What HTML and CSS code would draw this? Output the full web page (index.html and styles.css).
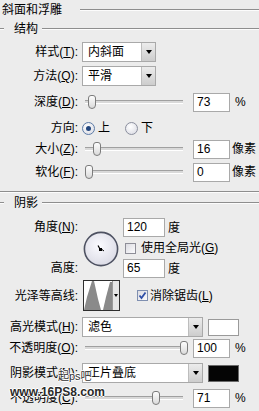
FILE: index.html
```html
<!DOCTYPE html>
<html lang="zh">
<head>
<meta charset="utf-8">
<link rel="stylesheet" href="styles.css">
</head>
<body>
<div class="panel">
  <div class="head title"><span class="head-text">斜面和浮雕</span><span class="rule"></span></div>
  <div class="head group"><span class="lead"></span><span class="head-text">结构</span><span class="rule"></span></div>

  <div class="row r1"><span class="lbl">样式(<u>T</u>):</span><div class="select narrow"><span class="val">内斜面</span><span class="btn"><i class="arrow"></i></span></div></div>
  <div class="row r2"><span class="lbl">方法(<u>Q</u>):</span><div class="select narrow"><span class="val">平滑</span><span class="btn"><i class="arrow"></i></span></div></div>
  <div class="row r3"><span class="lbl">深度(<u>D</u>):</span><div class="slider"><span class="track"></span><span class="thumb" style="left:3px"></span></div><span class="num">73</span><span class="unit pct">%</span></div>
  <div class="row r4"><span class="lbl">方向:</span><span class="radio on"></span><span class="rtext">上</span><span class="radio off"></span><span class="rtext">下</span></div>
  <div class="row r5"><span class="lbl">大小(<u>Z</u>):</span><div class="slider"><span class="track"></span><span class="thumb" style="left:8px"></span></div><span class="num">16</span><span class="unit px">像素</span></div>
  <div class="row r6"><span class="lbl">软化(<u>F</u>):</span><div class="slider"><span class="track"></span><span class="thumb" style="left:0px"></span></div><span class="num">0</span><span class="unit px">像素</span></div>

  <div class="divider"></div>
  <div class="head group g2"><span class="lead"></span><span class="head-text">阴影</span><span class="rule"></span></div>

  <div class="angle">
    <div class="angle-labels"><span class="lbl">角度(<u>N</u>):</span><span class="lbl">高度:</span></div>
    <svg class="dial" width="36" height="36" viewBox="0 0 36 36">
      <defs>
        <radialGradient id="dg" cx="45%" cy="40%" r="60%">
          <stop offset="0" stop-color="#fbfbff"/>
          <stop offset="1" stop-color="#dcdce6"/>
        </radialGradient>
      </defs>
      <circle cx="18" cy="18" r="16.6" fill="url(#dg)" stroke="#4e5262" stroke-width="1.6"/>
      <line x1="17" y1="18" x2="15" y2="14.5" stroke="#000" stroke-width="1.2"/>
      <rect x="16" y="17" width="3" height="3" fill="#000"/>
      <line x1="19" y1="18.5" x2="21" y2="20" stroke="#000" stroke-width="1"/>
    </svg>
    <div class="angle-ctrl">
      <div class="aline"><span class="num first">120</span><span class="unit deg">度</span></div>
      <div class="aline chkline"><span class="check"></span><span class="ctext">使用全局光(<u>G</u>)</span></div>
      <div class="aline"><span class="num first">65</span><span class="unit deg">度</span></div>
    </div>
  </div>

  <div class="row contour-row"><span class="lbl">光泽等高线:</span>
    <div class="contour">
      <svg class="curve" width="28" height="29" viewBox="0 0 28 29">
        <path d="M0 29 L3 16 L8 0 L10 0 L14 18 L17 29 Z" fill="#8a8a8a"/>
        <path d="M19 29 L22 16 L26 1 L28 1 L28 29 Z" fill="#8a8a8a"/>
      </svg>
      <span class="cbtn"><i class="arrow small"></i></span>
    </div>
    <span class="check on"><svg width="9" height="9" viewBox="0 0 9 9"><path d="M1.5 4.5 L3.5 7 L7.5 1.5" fill="none" stroke="#2f4fa8" stroke-width="1.8"/></svg></span><span class="ctext2">消除锯齿(<u>L</u>)</span>
  </div>

  <div class="row r7"><span class="lbl">高光模式(<u>H</u>):</span><div class="select wide"><span class="val">滤色</span><span class="btn"><i class="arrow"></i></span></div><span class="swatch white"></span></div>
  <div class="row r8"><span class="lbl">不透明度(<u>O</u>):</span><div class="slider"><span class="track"></span><span class="thumb" style="left:95px"></span></div><span class="num">100</span><span class="unit pct">%</span></div>
  <div class="row r9"><span class="lbl">阴影模式(<u>N</u>):</span><div class="select wide"><span class="val">正片叠底</span><span class="btn"><i class="arrow"></i></span></div><span class="swatch black"></span></div>
  <div class="row r10"><span class="lbl">不透明度(<u>C</u>):</span><div class="slider"><span class="track"></span><span class="thumb" style="left:67px"></span></div><span class="num">71</span><span class="unit pct">%</span></div>

  <div class="wm">起ps吧</div>
  <div class="wm2">www.16<b>PS8</b>.com</div>
</div>
</body>
</html>
```

FILE: styles.css
```css
* { box-sizing: border-box; }
html, body { margin: 0; padding: 0; }
body {
  background: #ececec;
  font-family: "Liberation Sans", "Noto Sans CJK SC", sans-serif;
  font-size: 12px;
  line-height: 14px;
  color: #000;
  width: 259px;
  height: 411px;
  overflow: hidden;
}
u { text-decoration: underline; text-underline-offset: 1px; }
.panel { position: relative; display: flex; flex-direction: column; width: 259px; height: 411px; }

.head { display: flex; align-items: center; }
.title { height: 20px; padding-left: 2px; }
.title .rule { margin-left: 18px; }
.rule { flex: 1; height: 2px; border-top: 1px solid #8e8e8e; border-bottom: 1px solid #fcfcfc; }
.group { height: 18px; }
.g2 { margin-top: 1px; }
.lead { width: 4px; height: 2px; border-top: 1px solid #8e8e8e; border-bottom: 1px solid #fcfcfc; margin-right: 10px; }
.group .rule { margin-left: 4px; }

.divider { height: 2px; margin-top: 9px; border-top: 1px solid #8e8e8e; border-bottom: 1px solid #fcfcfc; flex: none; }

.row { display: flex; align-items: center; height: 20px; flex: none; }
.lbl { width: 80px; text-align: right; padding-right: 2px; flex: none; white-space: nowrap; }

.r1 { margin-top: 4px; }
.r2 { margin-top: 4px; }
.r3 { margin-top: 6px; }
.r4 { margin-top: 6px; }
.r5 { margin-top: 1px; }
.r6 { margin-top: 3px; }
.r7 { margin-top: 6px; }
.r8 { margin-top: 1px; }
.r9 { margin-top: 5px; }
.r10 { margin-top: 5px; }

.select { display: flex; height: 20px; margin-left: 2px; background: #fff; border: 1px solid #a9a9a9; flex: none; }
.select.narrow { width: 74px; }
.select.wide { width: 121px; }
.select .val { flex: 1; padding-left: 5px; line-height: 18px; white-space: nowrap; overflow: hidden; }
.select .btn { width: 14px; background: linear-gradient(#ececec, #cdcdcd); border-left: 1px solid #bdbdbd; display: flex; align-items: center; justify-content: center; }
.arrow { width: 0; height: 0; border-left: 3.5px solid transparent; border-right: 3.5px solid transparent; border-top: 4px solid #000; }
.arrow.small { border-left-width: 2.5px; border-right-width: 2.5px; border-top-width: 3px; }

.slider { position: relative; width: 98px; height: 14px; margin-left: 5px; flex: none; }
.slider .track { position: absolute; left: 0; right: 0; top: 5px; height: 4px; border-top: 1px solid #a0a0a0; border-bottom: 1px solid #fff; background: #d9d9d9; }
.slider .thumb { position: absolute; top: 0; width: 8px; height: 14px; border: 1px solid #7c7c7c; border-radius: 3px 3px 4px 4px; background: linear-gradient(#fdfdfd, #dadada); }

.num { width: 37px; height: 19px; margin-left: 10px; background: #fff; border: 1px solid #a9a9a9; padding-left: 3px; line-height: 17px; flex: none; }
.unit.pct { margin-left: 5px; }
.unit.px { margin-left: 2px; }

.radio { width: 13px; height: 13px; border-radius: 50%; border: 1px solid #8b8f9e; background: radial-gradient(circle at 40% 35%, #ffffff, #d6d7e0); margin-left: 2px; position: relative; flex: none; }
.radio.on { border-color: #5d7ca8; }
.radio.on::after { content: ""; position: absolute; left: 3px; top: 3px; width: 5px; height: 5px; border-radius: 50%; background: #22467e; }
.radio.off { margin-left: 15px; }
.rtext { margin-left: 3px; }

.angle { display: flex; height: 60px; margin-top: 6px; flex: none; }
.angle-labels { display: flex; flex-direction: column; justify-content: space-between; }
.angle-labels .lbl { line-height: 19px; height: 19px; }
.dial { margin-left: 3px; align-self: center; margin-top: 1px; }
.angle-ctrl { display: flex; flex-direction: column; margin-left: 4px; }
.aline { display: flex; align-items: center; height: 19px; }
.aline.chkline { height: 22px; }
.num.first { margin-left: 0; width: 42px; }
.unit.deg { margin-left: 3px; }
.check { width: 11px; height: 11px; border: 1px solid #8e8e98; background: linear-gradient(135deg, #dcdce2, #fbfbfd); margin-left: 2px; flex: none; display: flex; align-items: center; justify-content: center; }
.ctext { margin-left: 5px; white-space: nowrap; }

.contour-row { height: 31px; margin-top: 2px; }
.contour { display: flex; width: 37px; height: 31px; margin-left: 3px; border: 1px solid #2e2e2e; background: #fff; flex: none; }
.curve { flex: none; }
.cbtn { flex: 1; border-left: 1px solid #9a9a9a; background: #e6e6e6; display: flex; align-items: center; justify-content: center; }
.check.on { margin-left: 17px; border-color: #7f8fb0; }
.ctext2 { margin-left: 2px; white-space: nowrap; }

.swatch { width: 31px; height: 17px; margin-left: 5px; border: 1px solid #9a9a9a; flex: none; }
.swatch.white { background: #fff; }
.swatch.black { background: #050505; border-color: #6a6a6a; }

.wm { position: absolute; left: 58px; top: 369px; font-size: 11px; line-height: 14px; color: #333; text-shadow: 1px 0 0 #fff, -1px 0 0 #fff, 0 1px 0 #fff, 0 -1px 0 #fff; }
.wm2 { position: absolute; left: 10px; top: 386px; font-size: 12px; line-height: 12px; font-weight: bold; color: #2a2a2a; text-shadow: 1px 0 0 #fff, -1px 0 0 #fff, 0 1px 0 #fff, 0 -1px 0 #fff; }
```
